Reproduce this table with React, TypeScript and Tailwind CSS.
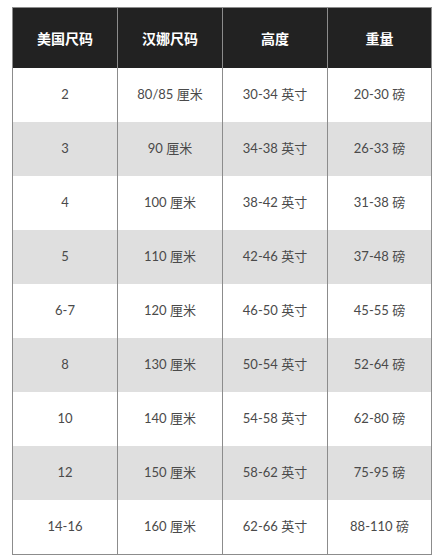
import React from "react";

const rows = [
  ["2", "80/85 厘米", "30-34 英寸", "20-30 磅"],
  ["3", "90 厘米", "34-38 英寸", "26-33 磅"],
  ["4", "100 厘米", "38-42 英寸", "31-38 磅"],
  ["5", "110 厘米", "42-46 英寸", "37-48 磅"],
  ["6-7", "120 厘米", "46-50 英寸", "45-55 磅"],
  ["8", "130 厘米", "50-54 英寸", "52-64 磅"],
  ["10", "140 厘米", "54-58 英寸", "62-80 磅"],
  ["12", "150 厘米", "58-62 英寸", "75-95 磅"],
  ["14-16", "160 厘米", "62-66 英寸", "88-110 磅"],
];

const heads = ["美国尺码", "汉娜尺码", "高度", "重量"];

export default function App() {
  return (
    <div className="w-[440px] h-[560px] bg-white pt-[7px] pl-[12px]">
      <div
        className="w-[420px] border border-[#8c8c8c] flex flex-col"
        style={{ fontFamily: '"Lato", "Noto Sans CJK SC", sans-serif' }}
      >
        <div className="grid grid-cols-[104px_105px_105px_104px] h-[60px] bg-[#222222]">
          {heads.map((h, i) => (
            <div
              key={h}
              className={`flex items-center justify-center text-white font-bold text-[14px] ${i > 0 ? "border-l border-[#8c8c8c]" : ""}`}
              style={{ fontFamily: '"Noto Sans CJK SC", sans-serif' }}
            >
              {h}
            </div>
          ))}
        </div>
        {rows.map((r, ri) => (
          <div
            key={ri}
            className={`grid grid-cols-[104px_105px_105px_104px] h-[54px] ${ri % 2 === 1 ? "bg-[#dfdfdf]" : "bg-white"}`}
          >
            {r.map((c, ci) => (
              <div
                key={ci}
                className={`flex items-center justify-center text-[13px] text-[#4a4a4a] ${ci > 0 ? "border-l border-[#8c8c8c]" : ""}`}
              >
                {c}
              </div>
            ))}
          </div>
        ))}
      </div>
    </div>
  );
}
